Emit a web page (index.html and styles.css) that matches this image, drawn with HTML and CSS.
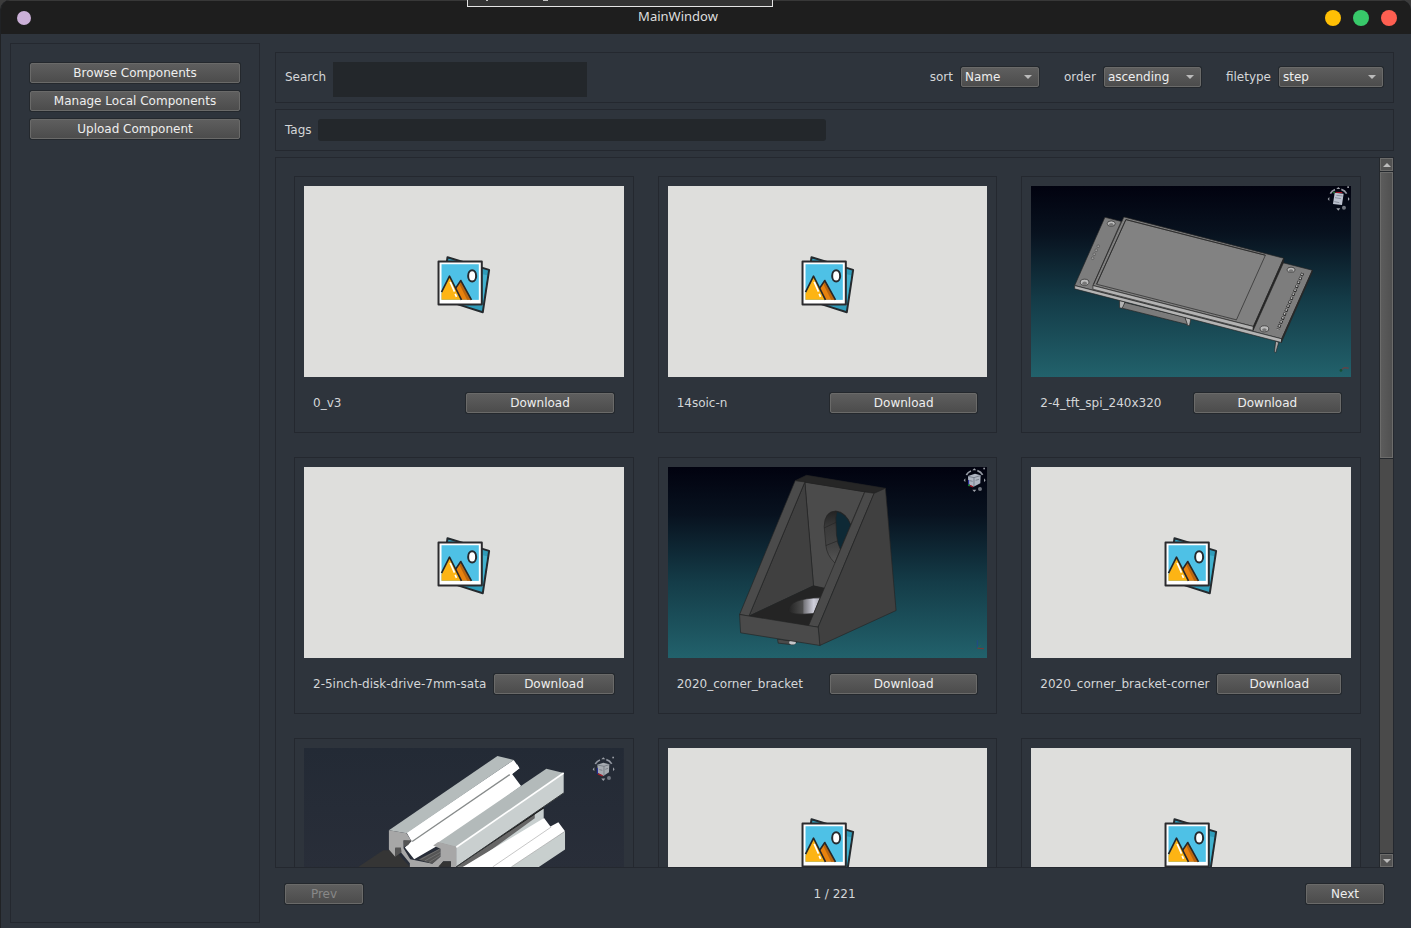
FILE: index.html
```html
<!DOCTYPE html>
<html lang="en">
<head>
<meta charset="utf-8">
<title>MainWindow</title>
<link rel="stylesheet" href="styles.css">
</head>
<body>
<svg class="defs" aria-hidden="true">
  <defs>
    <linearGradient id="sky" x1="0" y1="0" x2="0" y2="1">
      <stop offset="0" stop-color="#01020f"/><stop offset=".25" stop-color="#08121f"/><stop offset=".6" stop-color="#143c48"/><stop offset="1" stop-color="#22626c"/>
    </linearGradient>
    <linearGradient id="slate" x1="0" y1="0" x2="0" y2="1">
      <stop offset="0" stop-color="#232a35"/><stop offset=".63" stop-color="#292e39"/><stop offset="1" stop-color="#2f343f"/>
    </linearGradient>
    <linearGradient id="bore" x1="0" y1="0" x2="1" y2="0">
      <stop offset="0" stop-color="#222"/><stop offset=".45" stop-color="#4c4c4c"/><stop offset=".5" stop-color="#77777c"/><stop offset=".8" stop-color="#d0d0dc"/><stop offset="1" stop-color="#a8a8b0"/>
    </linearGradient>
    <linearGradient id="slot" x1="0" y1="0" x2="0" y2="1">
      <stop offset="0" stop-color="#222"/><stop offset=".3" stop-color="#3a3a3a"/><stop offset=".7" stop-color="#444"/><stop offset="1" stop-color="#555"/>
    </linearGradient>
    <symbol id="placeholder" viewBox="0 0 320 191">
      <g transform="translate(121 59) scale(.3333)" stroke-linejoin="round">
        <path d="M68 37 193 75 174 202 104 180 50 160Z" fill="#2f9cba" stroke="#252a2e" stroke-width="6"/>
        <path d="M174 88 187 91 172 183 150 182 174 178Z" fill="#43b2ce"/>
        <rect x="41" y="50" width="130" height="129" fill="#fff" stroke="#2b2b2e" stroke-width="6"/>
        <rect x="50" y="58" width="112" height="107" fill="#4ec1e6"/>
        <path d="M92 133 108 107 139 165H105Z" fill="#e8820e"/>
        <path d="M108 107 139 165H127L105 120Z" fill="#b9650f"/>
        <path d="M91 132 108 107 140 165" fill="none" stroke="#282828" stroke-width="5"/>
        <path d="M50 146 74 95 107 165H50Z" fill="#fdb414"/>
        <path d="M50 142 74 94 110 165" fill="none" stroke="#282828" stroke-width="5"/>
        <path d="M76 111 89 140M91 147l4 9" stroke="#fff" stroke-width="5"/>
        <ellipse cx="142" cy="93" rx="12" ry="17" fill="#fff" stroke="#262a2e" stroke-width="6"/>
      </g>
    </symbol>
    <symbol id="orbit" viewBox="0 0 70 75">
      <g fill="none" stroke="#9499a3" stroke-width="5">
        <path d="M10 23Q15 14 24 11M43 10Q54 13 59 23"/>
      </g>
      <g fill="#9ca0a8"><path d="m34 3 6 6H28ZM2 39l5-6v12ZM68 39l-5-6v12ZM34 74l-6-7h12Z"/><rect x="61" y="1" width="5" height="5"/></g>
      <circle cx="51" cy="65" r="6" fill="#70757f"/>
    </symbol>
  </defs>
</svg>
<div class="window">
  <header class="titlebar">
    <span class="dot dot-pin"></span>
    <h1 class="title">MainWindow</h1>
    <div class="window-controls">
      <button class="dot dot-min" aria-label="Minimize"></button>
      <button class="dot dot-max" aria-label="Maximize"></button>
      <button class="dot dot-close" aria-label="Close"></button>
    </div>
    <div class="tooltip"><svg width="304" height="6" viewBox="0 0 304 6" aria-hidden="true"><path d="M18 0h2v1h-2ZM75 0h5v1h-5Z" fill="#c4c4c4"/></svg></div>
  </header>
  <div class="content">
    <nav class="sidebar panel">
      <button class="btn">Browse Components</button>
      <button class="btn">Manage Local Components</button>
      <button class="btn">Upload Component</button>
    </nav>
    <main class="main">
      <section class="panel filters">
        <label for="search">Search</label>
        <input id="search" class="field search-field" type="text">
        <div class="choices">
          <div class="choice"><label for="sort">sort</label><span class="combo combo-sort"><select id="sort"><option>Name</option></select></span></div>
          <div class="choice"><label for="order">order</label><span class="combo combo-order"><select id="order"><option>ascending</option></select></span></div>
          <div class="choice"><label for="filetype">filetype</label><span class="combo combo-type"><select id="filetype"><option>step</option></select></span></div>
        </div>
      </section>
      <section class="panel tags">
        <label for="tags">Tags</label>
        <input id="tags" class="field tags-field" type="text">
      </section>
      <section class="panel results">
        <div class="grid">
          <article class="card">
            <svg class="thumb" viewBox="0 0 320 191"><use href="#placeholder"/></svg>
            <div class="card-row"><span class="name">0_v3</span><button class="btn">Download</button></div>
          </article>
          <article class="card">
            <svg class="thumb" viewBox="0 0 320 191"><use href="#placeholder"/></svg>
            <div class="card-row"><span class="name">14soic-n</span><button class="btn">Download</button></div>
          </article>
          <article class="card">
            <svg class="thumb thumb-sky" viewBox="0 0 320 191" preserveAspectRatio="xMidYMid slice">
              <rect width="320" height="192" fill="url(#sky)"/>
              <g transform="translate(-6 -6) scale(.3333)" stroke="#242424" stroke-width="2" stroke-linejoin="round">
                <path d="M284 362 300 366 297 386 284 384ZM480 412 498 418 494 438 486 436Z" fill="#b4b4b4"/>
                <path d="M300 368 480 412 488 434 292 385Z" fill="#7b7b7b"/>
                <path d="M753 484 762 488 753 519 749 516Z" fill="#a8a8a8"/>
                <path d="M240 112 863 271 771 477 149 317Z" fill="#7d7d7d"/>
                <path d="M149 317 771 477 770 488 149 327Z" fill="#b4b4b4"/>
                <path d="M863 271 771 477 770 488 863 276Z" fill="#303030"/>
                <path d="M297 111 777 235 686 440 204 317Z" fill="#808080"/>
                <path d="M204 317 686 440 685 452 204 328Z" fill="#b2b2b2"/>
                <path d="M777 235 686 440 685 452 777 247Z" fill="#262626"/>
                <path d="M303 119 722 226 635 420 215 313Z" fill="#828282"/>
                <path d="M290 122 206 313M215 313 303 119 722 226" fill="none"/>
                <g fill="#bcbcbc"><ellipse cx="259" cy="131" rx="12" ry="8"/><ellipse cx="179" cy="307" rx="13" ry="9"/><ellipse cx="799" cy="270" rx="12" ry="8"/><ellipse cx="719" cy="447" rx="13" ry="9"/></g>
                <g fill="#777"><ellipse cx="259" cy="134" rx="7" ry="5" stroke="none"/><ellipse cx="179" cy="310" rx="7" ry="5" stroke="none"/><ellipse cx="799" cy="273" rx="7" ry="5" stroke="none"/><ellipse cx="719" cy="450" rx="7" ry="5" stroke="none"/></g>
                <g fill="#999" stroke-width="1"><circle cx="220" cy="199" r="4"/><circle cx="214" cy="211" r="4"/><circle cx="208" cy="223" r="4"/><circle cx="203" cy="235" r="4"/></g>
                <path d="M834 280 760 448" stroke="#262626" stroke-width="9" stroke-dasharray="9 4"/>
                <path d="M833 281 759 449" stroke="#b8b8b8" stroke-width="5" stroke-dasharray="5 8"/>
                <g stroke="none">
                  <use href="#orbit" x="907" y="18" width="70" height="75"/>
                  <path d="M930 38 957 41 952 75 925 72Z" fill="#bcc2cf"/>
                  <path d="m931 53 18 3M929 65l15 3M935 46l19 2" stroke="#6d7380" stroke-width="2"/>
                  <path d="m933 37 20 1" stroke="#b11625" stroke-width="3"/><path d="m925 39 6-3" stroke="#217c33" stroke-width="4"/>
                  <path d="m950 570 8-6 14 1" fill="none" stroke="#813637" stroke-width="3"/><circle cx="949" cy="572" r="4" fill="#174f33"/>
                </g>
              </g>
            </svg>
            <div class="card-row"><span class="name">2-4_tft_spi_240x320</span><button class="btn">Download</button></div>
          </article>
          <article class="card">
            <svg class="thumb" viewBox="0 0 320 191"><use href="#placeholder"/></svg>
            <div class="card-row"><span class="name">2-5inch-disk-drive-7mm-sata</span><button class="btn">Download</button></div>
          </article>
          <article class="card">
            <svg class="thumb thumb-sky" viewBox="0 0 320 191" preserveAspectRatio="xMidYMid slice">
              <rect width="320" height="192" fill="url(#sky)"/>
              <g transform="translate(-8 -7) scale(.3333)" stroke="#242424" stroke-width="2" stroke-linejoin="round">
                <path d="M353 538 412 546 400 555 355 550Z" fill="#4a4a4a"/><ellipse cx="398" cy="548" rx="10" ry="6" fill="#c5c5c9" stroke="none"/>
                <path d="M435 66 643 100 500 390 461 378Z" fill="#4b4b4b"/>
                <path d="M435 66 461 378 267 469Z" fill="#404040"/>
                <path d="M461 378 500 386 448 499 267 469Z" fill="#242424"/>
                <path d="M385 452Q390 415 481 414L462 461Q388 468 385 452Z" fill="url(#bore)"/>
                <path d="M493 200Q494 154 528 153 559 156 573 195L525 309Q500 285 498 255Z" fill="url(#slot)"/>
                <path d="M531 155Q558 160 573 195L542 269Q532 250 530 225L528 174Z" fill="#0e2935"/>
                <path d="M493 204 529 187M498 257 533 243M614 97 572 196" fill="none"/>
                <path d="M406 62 440 46 677 85 643 100Z" fill="#262626"/>
                <path d="M406 62 435 66 267 469 239 464Z" fill="#4b4b4b"/>
                <path d="M615 96 643 100 475 502 446 498Z" fill="#4a4a4a"/>
                <path d="M643 100 677 85 709 452 480 557 475 502Z" fill="#404040"/>
                <path d="M239 464 475 502 480 557 242 519Z" fill="#4a4a4a"/>
                <g stroke="none">
                  <use href="#orbit" x="910" y="22" width="70" height="75"/>
                  <path d="M925 48 946 41 963 46 962 70 942 80 926 73Z" fill="#aeb5c2"/>
                  <path d="m925 49 18 4v26M943 53l19-6M930 62l9 2M948 61l10-3" fill="none" stroke="#5e6572" stroke-width="2"/>
                  <path d="M927 60v16" stroke="#171b9c" stroke-width="3"/><path d="m929 76 11 5" stroke="#a01825" stroke-width="4"/><circle cx="928" cy="76" r="3" fill="#178b35"/>
                  <path d="M953 541v24" stroke="#214a89" stroke-width="3"/><path d="m953 565 20 2" stroke="#7c3836" stroke-width="3"/><path d="m954 564 10-7" stroke="#21764f" stroke-width="2"/>
                </g>
              </g>
            </svg>
            <div class="card-row"><span class="name">2020_corner_bracket</span><button class="btn">Download</button></div>
          </article>
          <article class="card">
            <svg class="thumb" viewBox="0 0 320 191"><use href="#placeholder"/></svg>
            <div class="card-row"><span class="name">2020_corner_bracket-corner</span><button class="btn">Download</button></div>
          </article>
          <article class="card">
            <svg class="thumb thumb-slate" viewBox="0 0 320 191" preserveAspectRatio="xMidYMid slice">
              <rect width="320" height="192" fill="url(#slate)"/>
              <g transform="translate(-9 -13) scale(.3333)">
                <path d="M191 396 265 346 300 346 345 396V440H130Z" fill="#353535"/>
                <path d="M747 220V250L600 396H480L560 330Z" fill="#c8cfcf"/>
                <path d="M480 396 720 235V250L520 396Z" fill="#666"/>
                <path d="M482 396 747 218" stroke="#171717" stroke-width="4"/>
                <path d="M505 396 748 249 767 275 791 262 811 289 640 410H490Z" fill="#fff"/>
                <path d="M811 289V344L730 398 700 420H610L650 396Z" fill="#c8cfce"/>
                <path d="M594 396 770 276M650 396 811 289" stroke="#aaa" stroke-width="2"/>
                <path d="M335 293 657 75 674 100 652 117 679 153 450 320 358 373 330 338 350 319Z" fill="#fff"/>
                <path d="M352 320 645 119" stroke="#878b8b" stroke-width="4"/>
                <path d="M652 117 674 100 667 88 640 116Z" fill="#fff"/>
                <path d="M282 286 608 63 657 75 335 295Z" fill="#b5bcbc"/>
                <path d="M282 286 335 295 350 319 326 317V340L346 373 413 387 456 364 433 396V440H345V385L318 352V340H301V366L282 344Z" fill="#a7a7a7"/>
                <path d="M326 316H350L340 330 328 336ZM301 338H318L320 352 301 366Z" fill="#555"/>
                <path d="M370 374 437 340V366L413 387Z" fill="#555"/>
                <path d="m377 374 57-31M390 378l47-26M403 382l34-21" stroke="#7c7c7c" stroke-width="2"/>
                <path d="M430 323 755 101 807 114 484 337Z" fill="#b3baba"/>
                <path d="M484 337 807 114V174L484 396Z" fill="#c9cfcf"/>
                <path d="M484 337 807 114" stroke="#fff" stroke-width="5"/>
                <path d="M430 321 484 335V415H468V379H440L430 396 413 387 437 366V342L415 332Z" fill="#a7a7a7"/>
                <path d="M484 396 807 174" stroke="#35393b" stroke-width="3"/>
                <path d="M430 396 445 380H468V396Z" fill="#343434"/>
                <use href="#orbit" x="892" y="64" width="70" height="75"/>
                <path d="M908 89 926 83 944 88 943 112 926 123 910 114Z" fill="#a6abb1"/>
                <path d="m908 90 20 4v28M928 94l16-5M914 104l9 2M932 103l8-3" fill="none" stroke="#646a73" stroke-width="2"/>
                <path d="M908 99v18" stroke="#2028a2" stroke-width="3"/><path d="m910 117 14 6" stroke="#a51c2a" stroke-width="4"/>
              </g>
            </svg>
          </article>
          <article class="card">
            <svg class="thumb" viewBox="0 0 320 191"><use href="#placeholder"/></svg>
          </article>
          <article class="card">
            <svg class="thumb" viewBox="0 0 320 191"><use href="#placeholder"/></svg>
          </article>
        </div>
        <div class="scrollbar">
          <button class="step step-up" aria-label="Scroll up"></button>
          <div class="track"><div class="handle"></div></div>
          <button class="step step-down" aria-label="Scroll down"></button>
        </div>
      </section>
      <footer class="pager">
        <button class="btn" disabled>Prev</button>
        <span>1 / 221</span>
        <button class="btn">Next</button>
      </footer>
    </main>
  </div>
</div>
</body>
</html>
```
FILE: styles.css
```css
* { box-sizing: border-box; }
body {
  margin: 0;
  background: #3c3c3c;
  color: #d4d6d8;
  font: 12px/16px "DejaVu Sans", sans-serif;
}
button, input, select { font: inherit; color: inherit; margin: 0; padding: 0; }
.defs { position: absolute; width: 0; height: 0; }
.window {
  display: flex;
  flex-direction: column;
  height: 100vh;
  overflow: hidden;
  background: #2e343c;
  border-left: 1px solid #202225;
  border-radius: 10px 10px 0 0;
}
.titlebar {
  position: relative;
  display: flex;
  align-items: center;
  flex: none;
  height: 34px;
  padding: 0 14px 0 16px;
  background: #1e1e1e;
  border-top: 1px solid #383838;
}
.title {
  flex: 1;
  margin: 0;
  padding-bottom: 4px;
  text-align: center;
  font: 13px/18px "Noto Sans", sans-serif;
  color: #dedede;
}
.window-controls { display: flex; gap: 12px; }
.dot { width: 16px; height: 16px; border: 0; border-radius: 50%; }
.dot-pin { width: 14px; height: 14px; background: #cbb0d8; }
.dot-min { background: #ffbf05; }
.dot-max { background: #38c96a; }
.dot-close { background: #ff5f51; }
.tooltip {
  position: absolute;
  top: -1px;
  left: 466px;
  width: 306px;
  height: 7px;
  background: #333;
  border: 1px solid #e4e4e4;
  border-top: 0;
}
.tooltip svg { display: block; }
.content {
  display: flex;
  flex: 1;
  gap: 15px;
  min-height: 0;
  padding: 9px 17px 5px 9px;
}
.panel { border: 1px solid #24282f; }
.sidebar {
  display: flex;
  flex-direction: column;
  flex: none;
  gap: 8px;
  width: 250px;
  padding: 19px;
}
.btn {
  height: 20px;
  border: 1px solid #6a6a69;
  border-radius: 2px;
  background: linear-gradient(#5e5e5e, #4c4c4c);
  box-shadow: 0 0 0 1px #24282d;
  color: #eee;
  line-height: 18px;
}
.btn:disabled { color: #888; }
.main {
  display: flex;
  flex-direction: column;
  flex: 1;
  gap: 6px;
  min-width: 0;
  padding-top: 9px;
}
.filters, .tags { display: flex; align-items: center; flex: none; gap: 7px; padding: 9px; }
.filters { align-items: flex-start; padding: 9px 10px 5px 9px; line-height: 30px; }
.tags { gap: 6px; }
.field { border: 0; background: #23272b; outline: 0; }
.search-field { width: 254px; height: 35px; }
.tags-field { width: 508px; height: 22px; border-radius: 3px; }
.choices { display: flex; gap: 25px; margin-left: auto; }
.choice { display: flex; align-items: center; gap: 8px; }
.combo { position: relative; display: flex; }
.combo select {
  appearance: none;
  width: 100%;
  height: 20px;
  padding: 0 20px 1px 3px;
  border: 1px solid #6a6a69;
  border-radius: 2px;
  background: linear-gradient(#5e5e5e, #4c4c4c);
  box-shadow: 0 0 0 1px #24282d;
  color: #eee;
  line-height: 16px;
}
.combo::after {
  content: "";
  position: absolute;
  top: 8px;
  right: 7px;
  border: 4px solid transparent;
  border-top-color: #bbb;
  border-bottom: 0;
  pointer-events: none;
}
.combo-sort { width: 78px; }
.combo-order { width: 97px; }
.combo-type { width: 104px; }
.results { display: flex; flex: 1; min-height: 0; }
.grid {
  display: grid;
  grid-template-columns: repeat(3, minmax(0, 1fr));
  align-content: start;
  flex: 1;
  gap: 24px;
  min-width: 0;
  padding: 18px;
  overflow: hidden;
}
.card { padding: 9px 9px 19px; border: 1px solid #24282f; }
.thumb { display: block; width: 100%; aspect-ratio: 320 / 191; background: #dededc; }
.thumb-sky { background: linear-gradient(#01020f, #22626c); }
.thumb-slate { background: #292e39; }
.card-row { display: flex; align-items: center; gap: 8px; padding: 16px 10px 0 9px; }
.card-row .name, .card-row .btn { flex: 1 1 0; white-space: nowrap; }
.scrollbar { display: flex; flex-direction: column; flex: none; width: 14px; background: #24282d; gap: 1px; padding-left: 1px; }
.step {
  display: grid;
  place-items: center;
  width: 13px;
  height: 13px;
  background: #535353;
  border: 1px solid #6c6c6b;
}
.step::before { content: ""; border: 4px solid transparent; }
.step-up::before { border-bottom-color: #bbb; border-top: 0; }
.step-down::before { border-top-color: #bbb; border-bottom: 0; }
.track { flex: 1; background: #4a4a4a; }
.handle {
  height: 42%;
  background: linear-gradient(90deg, #5c5c5c, #505050);
  border: 1px solid #6c6c6b;
  box-shadow: 0 1px #24282d;
}
.pager {
  display: flex;
  justify-content: space-between;
  align-items: center;
  flex: none;
  height: 49px;
  padding: 0 10px 9px;
}
.pager .btn { width: 78px; }
```
